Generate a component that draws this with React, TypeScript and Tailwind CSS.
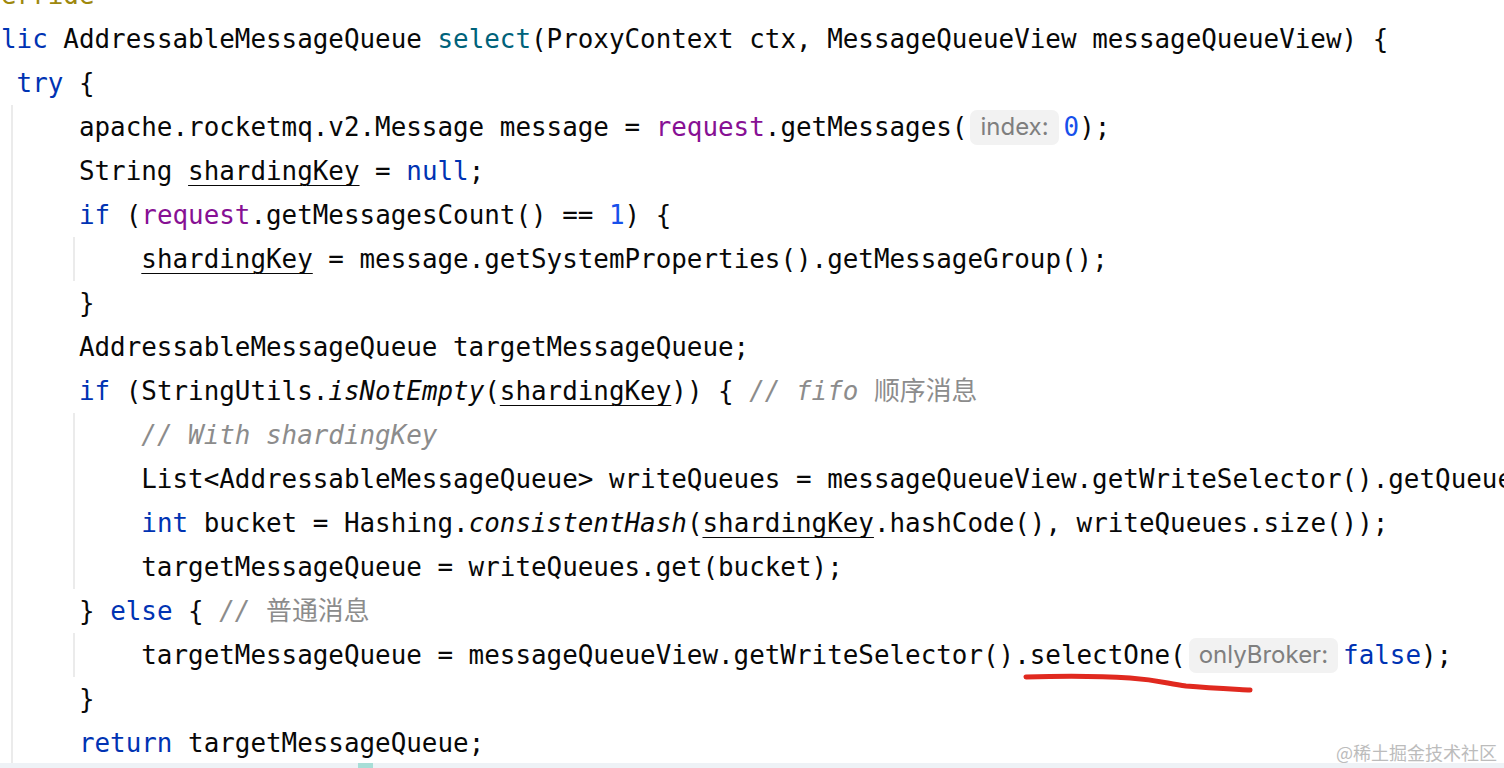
import React from 'react';

type Tok = { t: string; c?: string; chip?: boolean };

const KW = 'text-[#0033b3]';
const METHOD = 'text-[#00627a]';
const FIELD = 'text-[#871094]';
const NUM = 'text-[#1750eb]';
const ANN = 'text-[#9e880d]';
const COMMENT = 'text-[#8c8c8c]';
const COMMENT_I = 'text-[#8c8c8c] italic';
const STATIC = 'italic';
const REASSIGNED = 'underline decoration-1 underline-offset-[5px]';

const chip = (label: string): Tok => ({ t: label, chip: true });

// visible area starts at column 7 of the source, so indents are shifted
const lines: { toks: Tok[]; guides?: number[] }[] = [
    { toks: [{ t: 'erride', c: ANN }] },
    {
        toks: [
            { t: 'lic', c: KW },
            { t: ' AddressableMessageQueue ' },
            { t: 'select', c: METHOD },
            { t: '(ProxyContext ctx, MessageQueueView messageQueueView) {' },
        ],
    },
    { toks: [{ t: ' ' }, { t: 'try', c: KW }, { t: ' {' }] },
    {
        guides: [1],
        toks: [
            { t: '     apache.rocketmq.v2.Message message = ' },
            { t: 'request', c: FIELD },
            { t: '.getMessages(' },
            chip('index:'),
            { t: '0', c: NUM },
            { t: ');' },
        ],
    },
    {
        guides: [1],
        toks: [{ t: '     String ' }, { t: 'shardingKey', c: REASSIGNED }, { t: ' = ' }, { t: 'null', c: KW }, { t: ';' }],
    },
    {
        guides: [1],
        toks: [
            { t: '     ' },
            { t: 'if', c: KW },
            { t: ' (' },
            { t: 'request', c: FIELD },
            { t: '.getMessagesCount() == ' },
            { t: '1', c: NUM },
            { t: ') {' },
        ],
    },
    {
        guides: [1, 5],
        toks: [{ t: '         ' }, { t: 'shardingKey', c: REASSIGNED }, { t: ' = message.getSystemProperties().getMessageGroup();' }],
    },
    { guides: [1], toks: [{ t: '     }' }] },
    { guides: [1], toks: [{ t: '     AddressableMessageQueue targetMessageQueue;' }] },
    {
        guides: [1],
        toks: [
            { t: '     ' },
            { t: 'if', c: KW },
            { t: ' (StringUtils.' },
            { t: 'isNotEmpty', c: STATIC },
            { t: '(' },
            { t: 'shardingKey', c: REASSIGNED },
            { t: ')) { ' },
            { t: '// fifo ', c: COMMENT_I },
            { t: '顺序消息', c: COMMENT },
        ],
    },
    { guides: [1, 5], toks: [{ t: '         ' }, { t: '// With shardingKey', c: COMMENT_I }] },
    {
        guides: [1, 5],
        toks: [{ t: '         List<AddressableMessageQueue> writeQueues = messageQueueView.getWriteSelector().getQueues(ctx);' }],
    },
    {
        guides: [1, 5],
        toks: [
            { t: '         ' },
            { t: 'int', c: KW },
            { t: ' bucket = Hashing.' },
            { t: 'consistentHash', c: STATIC },
            { t: '(' },
            { t: 'shardingKey', c: REASSIGNED },
            { t: '.hashCode(), writeQueues.size());' },
        ],
    },
    { guides: [1, 5], toks: [{ t: '         targetMessageQueue = writeQueues.get(bucket);' }] },
    {
        guides: [1],
        toks: [{ t: '     } ' }, { t: 'else', c: KW }, { t: ' { ' }, { t: '// ', c: COMMENT_I }, { t: '普通消息', c: COMMENT }],
    },
    {
        guides: [1, 5],
        toks: [
            { t: '         targetMessageQueue = messageQueueView.getWriteSelector().selectOne(' },
            chip('onlyBroker:'),
            { t: 'false', c: KW },
            { t: ');' },
        ],
    },
    { guides: [1], toks: [{ t: '     }' }] },
    { guides: [1], toks: [{ t: '     ' }, { t: 'return', c: KW }, { t: ' targetMessageQueue;' }] },
];

const guideLeft: Record<number, string> = {
    1: 'left-[10px]',
    5: 'left-[72px]',
};

const CodeLine: React.FC<{ toks: Tok[]; guides?: number[] }> = ({ toks, guides }) => (
    <div className="relative flex items-center h-[44px] whitespace-pre">
        {guides?.map(g => (
            <span key={g} className={`absolute top-0 h-full w-[2px] bg-[#ebebeb] ${guideLeft[g]}`} />
        ))}
        {toks.map((tk, i) =>
            tk.chip ? (
                <span
                    key={i}
                    className="ml-[3px] mr-[5px] h-[35px] px-[10px] flex items-center rounded-[7px] bg-[#f2f2f2] text-[#7f7f7f] font-['Inter',sans-serif] text-[24px] not-italic"
                >
                    {tk.t}
                </span>
            ) : (
                <span key={i} className={`leading-[44px] ${tk.c ?? ''}`}>
                    {tk.t}
                </span>
            )
        )}
    </div>
);

export default function App() {
    return (
        <div className="relative w-[1504px] h-[768px] overflow-hidden bg-white flex flex-col">
            <div className="h-[763px] overflow-hidden">
                <div className="-mt-[27px] pl-[1px] font-['DejaVu_Sans_Mono','Noto_Sans_CJK_SC',monospace] text-[25.9px] text-[#080808]">
                    {lines.map((ln, i) => (
                        <CodeLine key={i} toks={ln.toks} guides={ln.guides} />
                    ))}
                </div>
            </div>
            <div className="h-[5px] bg-[#eef2f6] pl-[358px]">
                <div className="w-[15px] h-full bg-[#a8ded7]" />
            </div>

            <svg className="absolute inset-0 pointer-events-none" width="1504" height="768" viewBox="0 0 1504 768">
                <path
                    d="M1026 677 C1060 676 1100 676 1130 678 C1160 680 1168 684 1186 686 C1210 688 1232 689 1250 690"
                    fill="none"
                    stroke="#e0291f"
                    strokeWidth="5"
                    strokeLinecap="round"
                />
            </svg>

            <div className="absolute right-[7px] bottom-[4px] leading-[24px] text-[18px] text-[#bcbcbc] font-['Noto_Sans_CJK_SC',sans-serif]">
                @稀土掘金技术社区
            </div>
        </div>
    );
}
